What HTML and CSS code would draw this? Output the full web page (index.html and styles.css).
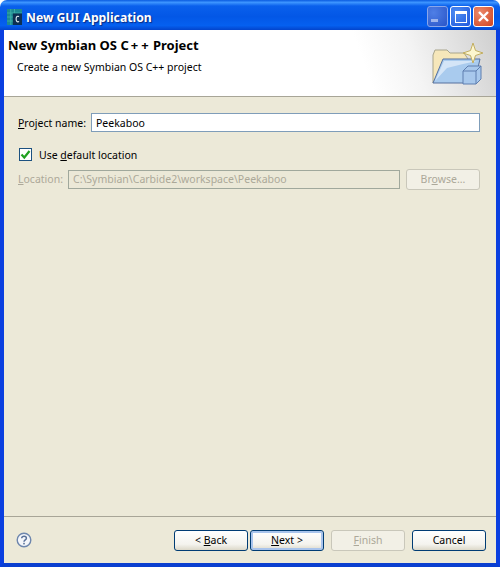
FILE: index.html
```html
<!DOCTYPE html>
<html lang="en">
  <head>
    <meta charset="UTF-8" />
    <title>New GUI Application</title>
    <link rel="stylesheet" href="styles.css">
  </head>
  <body>
    <div class="window">
      <div class="titlebar">
        <svg class="app-icon" width="15" height="16" viewBox="0 0 18 18" preserveAspectRatio="none">
          <rect x="0" y="0" width="18" height="18" fill="#1d8a92" />
          <path d="M0 4.500h18M0 9h18M0 13.500h18M4.500 0v18M9 0v5" stroke="#3fb0a8" stroke-width="1" />
          <rect x="7" y="5" width="11" height="13" fill="#0c2f52" />
          <path d="M14.500 8.500c-2-1-3.600 0-3.600 2.800s1.600 3.800 3.600 2.800" fill="none" stroke="#e6f2f5" stroke-width="1.300" />
        </svg>
        <span class="title-text">New GUI Application</span>
        <div class="win-buttons">
          <div class="win-btn win-min"><span class="min-bar"></span></div>
          <div class="win-btn win-max"><span class="max-box"></span></div>
          <div class="win-btn win-close">
            <svg width="13" height="13" viewBox="0 0 13 13">
              <path d="M2 2l9 9M11 2l-9 9" stroke="#fff" stroke-width="2.400" />
            </svg>
          </div>
        </div>
      </div>

      <div class="frame">
        <div class="header">
          <div class="header-text">
            <h1>New Symbian OS C<span class="plus">++</span> Project</h1>
            <p>Create a new Symbian OS C++ project</p>
          </div>
          <svg class="header-icon" width="54" height="46" viewBox="0 0 54 46">
            <path d="M3 40V12l2-5h12l3 3h14l4 6v6H14z" fill="#f6e7ba" stroke="#a8a58c" stroke-width="1" />
            <path d="M3 40l10-24h37l-3 13v11z" fill="#a9cbee" stroke="#56719f" stroke-width="1" />
            <path d="M5 38l9-20h33l-14 3-16 4z" fill="#d4e5f7" />
            <path d="M33 28l5-5h13v13l-5 5H33z" fill="#a8c8ec" stroke="#5f7fb0" stroke-width="1" />
            <path d="M33 28h13v13M46 28l5-5" fill="none" stroke="#5f7fb0" stroke-width="1" />
            <path d="M43 0l2.500 7.500 7.500 2.500-7.500 2.500-2.500 7.500-2.500-7.500-7.500-2.500 7.500-2.500z" fill="#fdf6cf" stroke="#c2ae62" stroke-width="1" />
          </svg>
        </div>

        <div class="content">
          <div class="row row-name">
            <label class="name-label"><u>P</u>roject name:</label>
            <input class="field" type="text" value="Peekaboo" />
          </div>
          <div class="row row-check">
            <span class="checkbox">
              <svg width="11" height="11" viewBox="0 0 11 11">
                <path d="M1.500 5.500l2.800 3 5.200-6.500" fill="none" stroke="#21a121" stroke-width="2.200" />
              </svg>
            </span>
            <label>Use <u>d</u>efault location</label>
          </div>
          <div class="row row-location">
            <label class="location-label disabled-text"><u>L</u>ocation:</label>
            <input class="field field-disabled" type="text" value="C:\Symbian\Carbide2\workspace\Peekaboo" disabled />
            <button class="btn btn-browse" disabled>Br<u>o</u>wse...</button>
          </div>
        </div>

        <div class="footer">
          <svg class="help" width="16" height="16" viewBox="0 0 16 16">
            <circle cx="8" cy="8" r="6.800" fill="#f4f6fa" stroke="#6d86ad" stroke-width="1.400" />
            <path d="M5.700 6.200c.2-2.600 4.700-2.600 4.700 0 0 1.700-2.400 1.700-2.400 3.600" fill="none" stroke="#5a7299" stroke-width="1.500" />
            <rect x="7.200" y="10.800" width="1.600" height="1.600" fill="#5a7299" />
          </svg>
          <div class="footer-buttons">
            <button class="btn">&lt; <u>B</u>ack</button>
            <button class="btn btn-default"><u>N</u>ext &gt;</button>
            <button class="btn btn-finish" disabled><u>F</u>inish</button>
            <button class="btn btn-cancel">Cancel</button>
          </div>
        </div>
      </div>
    </div>
  </body>
</html>
```

FILE: styles.css
```css
* {
  box-sizing: border-box;
  margin: 0;
  padding: 0;
}

body {
  font-family: "Noto Sans", "Liberation Sans", sans-serif;
  font-size: 10.5px;
  color: #000000;
  background-color: #ffffff;
}

.window {
  width: 500px;
  height: 567px;
  display: flex;
  flex-direction: column;
}

/* title bar */
.titlebar {
  height: 30px;
  flex-shrink: 0;
  display: flex;
  align-items: center;
  padding: 3px 6px 0 7px;
  border-radius: 7px 7px 0 0;
  background: linear-gradient(to bottom, #0a5be0 0%, #3d95ff 8%, #0a60ec 20%, #0357e6 55%, #0560f0 85%, #0344cc 100%);
}

.app-icon {
  flex-shrink: 0;
}

.title-text {
  margin-left: 4px;
  margin-top: 1px;
  font-size: 12.2px;
  font-weight: 700;
  color: #ffffff;
  text-shadow: 1px 1px 1px #0a2a80;
}

.win-buttons {
  margin-left: auto;
  display: flex;
  gap: 2px;
}

.win-btn {
  width: 21px;
  height: 21px;
  border: 1px solid #ffffff;
  border-radius: 3px;
  display: flex;
  align-items: center;
  justify-content: center;
}

.win-min {
  background: radial-gradient(circle at 30% 30%, #4f7fe6, #2a55c8);
  border-color: #8aa6ea;
}

.min-bar {
  width: 7px;
  height: 3px;
  background-color: #9db4ec;
  margin-top: 8px;
  margin-right: 6px;
}

.win-max {
  background: radial-gradient(circle at 30% 30%, #4d8cf2, #2259dc);
}

.max-box {
  width: 12px;
  height: 12px;
  border: 1px solid #ffffff;
  border-top-width: 3px;
}

.win-close {
  background: radial-gradient(circle at 30% 30%, #ec8a6c, #d0431f);
}

/* dialog frame */
.frame {
  flex: 1;
  display: flex;
  flex-direction: column;
  min-height: 0;
  border-left: 4px solid #0a3fe0;
  border-right: 4px solid #0a3fe0;
  border-bottom: 4px solid #0a3fd0;
  background-color: #ece9d8;
}

.header {
  height: 67px;
  flex-shrink: 0;
  display: flex;
  justify-content: space-between;
  padding: 0 12px 0 4px;
  border-bottom: 1px solid #a8a597;
  background: linear-gradient(250deg, #cfcfcf 0%, #f4f4f4 18%, #ffffff 28%);
}

.header h1 {
  margin-top: 7px;
  font-size: 13px;
  font-weight: 700;
  line-height: 17px;
}

.plus {
  letter-spacing: 3px;
  margin: 0 -2px 0 2px;
}

.header p {
  margin-top: 6px;
  padding-left: 9px;
  line-height: 15px;
}

.header-icon {
  margin-top: 13px;
}

.content {
  flex: 1;
  padding: 16px 16px 0 14px;
}

.row {
  display: flex;
  align-items: center;
}

.row-name {
  height: 19px;
}

.name-label {
  width: 73px;
}

.field {
  flex: 1;
  min-width: 0;
  height: 19px;
  padding: 0 4px;
  font-family: inherit;
  font-size: 10.5px;
  color: #000000;
  background-color: #ffffff;
  border: 1px solid #7f9db9;
  outline: none;
}

.row-check {
  height: 13px;
  margin-top: 16px;
  gap: 7px;
  padding-left: 1px;
}

.checkbox {
  width: 13px;
  height: 13px;
  flex-shrink: 0;
  display: flex;
  align-items: center;
  justify-content: center;
  background-color: #ffffff;
  border: 1px solid #1c5180;
}

.row-location {
  margin-top: 8px;
  height: 20px;
}

.location-label {
  width: 50px;
}

.disabled-text {
  color: #aca899;
}

.field-disabled {
  color: #aca899;
  background-color: #ebe8d7;
  border-color: #a0a89c;
}

.btn {
  width: 74px;
  height: 21px;
  flex-shrink: 0;
  font-family: inherit;
  font-size: 10.5px;
  color: #000000;
  border: 1px solid #003c74;
  border-radius: 3px;
  background: linear-gradient(to bottom, #ffffff 0%, #f4f3ee 70%, #dcd8c9 100%);
}

.btn:disabled {
  color: #aca899;
  border-color: #c9c7ba;
  background: #f2f0e6;
}

.btn-browse {
  margin-left: 6px;
}

/* button bar */
.footer {
  height: 47px;
  flex-shrink: 0;
  display: flex;
  align-items: center;
  justify-content: space-between;
  padding: 0 10px 0 12px;
  border-top: 1px solid #a8a597;
}

.footer-buttons {
  display: flex;
}

.btn-default {
  margin-left: 2px;
  border-color: #003c74;
  box-shadow: inset 0 0 0 2px #a9c4ec;
}

.btn-finish,
.btn-cancel {
  margin-left: 7px;
}
```
